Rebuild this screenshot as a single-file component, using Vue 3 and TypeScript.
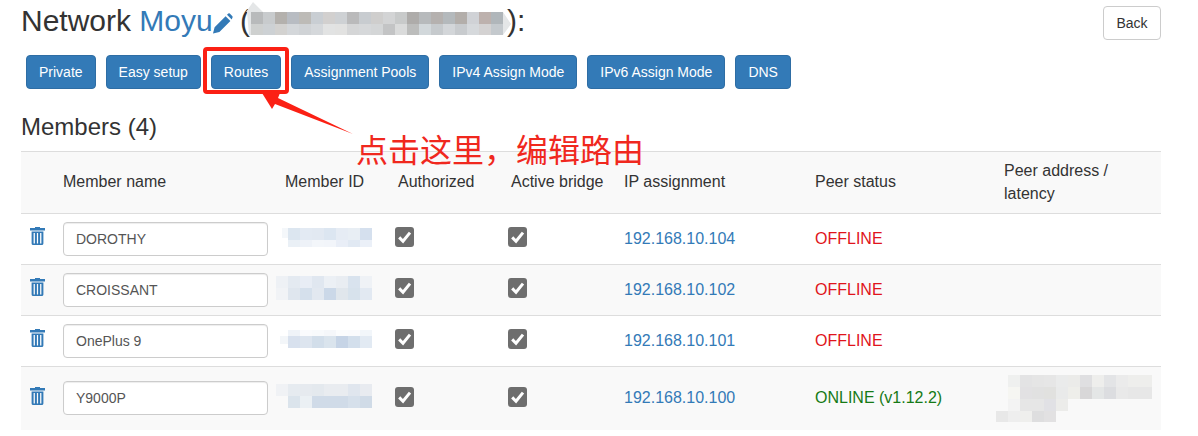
<script setup lang="ts">
interface Mosaic { x: number; y: number; h: number; colors: string[] }
interface Member { name: string; mosaic: Mosaic[]; ip: string; status: string; online: boolean }

const buttons: string[] = ['Private', 'Easy setup', 'Routes', 'Assignment Pools', 'IPv4 Assign Mode', 'IPv6 Assign Mode', 'DNS']
const headers: string[] = ['', 'Member name', 'Member ID', 'Authorized', 'Active bridge', 'IP assignment', 'Peer status', 'Peer address / latency']

const members: Member[] = [
  { name: 'DOROTHY', ip: '192.168.10.104', status: 'OFFLINE', online: false, mosaic: [
    { x: 6, y: 3, h: 10, colors: ['#f4f7fa'] },
    { x: 12, y: 3, h: 12, colors: ['#dce6f0', '#e3eaf3', '#e2e9f2', '#dce6f1', '#e6ecf4', '#e8eef4', '#d5e0ee'] },
    { x: 12, y: 15, h: 7, colors: ['#eaf0f6', '#eef2f8', '#f3f6fa', '#f2f5fa', '#e9eef7', '#e1e9f3', '#ebf0f8'] },
  ] },
  { name: 'CROISSANT', ip: '192.168.10.102', status: 'OFFLINE', online: false, mosaic: [
    { x: 0, y: 0, h: 12, colors: ['#eef1f5', '#e4eaf1', '#e8edf5', '#e0e7f0', '#ecf0f5', '#e9edf2', '#d9e3ee', '#eff2f6'] },
    { x: 0, y: 12, h: 12, colors: ['#f1f3f6', '#dfe6ee', '#d5e0ec', '#e2e8f0', '#cbd8e8', '#e0e6ec', '#d7e2ec', '#e2e9f2'] },
  ] },
  { name: 'OnePlus 9', ip: '192.168.10.101', status: 'OFFLINE', online: false, mosaic: [
    { x: 4, y: 9, h: 8, colors: ['#f3f6f9'] },
    { x: 12, y: 3, h: 6, colors: ['#eff3f8', '#fafbfd', '#f8fafc', '#f5f7fa', '#fbfcfd', '#fafbfd', '#f2f6fa'] },
    { x: 12, y: 9, h: 12, colors: ['#d8e1ee', '#dde5ef', '#d2deea', '#dae4ed', '#c6d4e6', '#d3dfec', '#e2eaf3'] },
  ] },
  { name: 'Y9000P', ip: '192.168.10.100', status: 'ONLINE (v1.12.2)', online: true, mosaic: [
    { x: 0, y: 0, h: 12, colors: ['#f0f2f5', '#e6ebf0', '#e6eaef', '#e4e9ee', '#e9ecf0', '#e9ecf0', '#e0e6ee', '#e8ebf0'] },
    { x: 12, y: 12, h: 12, colors: ['#dbe4ec', '#ebf0f4', '#d0dbe8', '#d0dbe8', '#d0dbe8', '#d6e0eb', '#d0dbe7'] },
  ] },
]

const titleMosaic: Mosaic[] = [
  { x: 9, y: 10, h: 12, colors: ['#b8babb', '#c8cbcd', '#b4b1ad', '#b8bcc2', '#bdbbb7', '#c9ced3', '#d2d0cf', '#ced1d4', '#bababb', '#c8ccd0', '#cfcecd', '#d3d4d5', '#c8caca', '#aeacaa', '#b7babc', '#b5b1af', '#b4b9bc', '#b3aeaa', '#d0d2d6', '#bdb1ad', '#b0b6ba'] },
  { x: 9, y: 22, h: 11, colors: ['#ced0cf', '#cdd1d4', '#d3d2d0', '#d4d7da', '#d0d3d6', '#d5d8db', '#e2e3e3', '#e2e2e1', '#d5d6d7', '#d6d8da', '#d4d6d7', '#c3c4c5', '#dadbdb', '#bcbdbc', '#d2d8db', '#c6cacd', '#d3d6d9', '#c8cbce', '#d6d9dc', '#d4d2d2', '#c4c9cd'] },
]

const addressMosaic: Mosaic[] = [
  { x: 12, y: 0, h: 12, colors: ['#eff0ef', '#e3e3e4', '#e5e5e5', '#e6e6e6', '#eaebeb', '#ebebe9', '#dfdfe1', '#eeeeec', '#e3e4e6', '#ebebeb', '#eeeeec', '#eeeeec', '#e8e8e8'] },
  { x: 12, y: 12, h: 12, colors: ['#f6f6f2', '#e2e1e3', '#e1e1e1', '#e1e1df', '#e9eaea', '#eeeeea', '#d8d7d8', '#e4e6e6', '#dcdde0', '#e9e9e9', '#e7e7e7', '#e7e7e7', '#e8e8e8'] },
  { x: 12, y: 24, h: 12, colors: ['#f3f3f3', '#e6e6e6', '#e6e6e6', '#e1e1e5', '#ececea'] },
  { x: 0, y: 36, h: 11, colors: ['#e8e8e8', '#eeeeee', '#efefed', '#dededf', '#e2e1e2'] },
]
</script>

<template>
  <div class="page">
    <header class="head">
      <h2 class="title">
        Network <a class="link">Moyu</a><svg class="pencil" width="20" height="21" viewBox="0 0 20 21"><path d="M0 20.5 L1.6 14.2 L12.6 3.2 L17.4 8 L6.4 19 Z M14 1.8 L15.3 .6 Q16 0 16.8 .6 L19.4 3.2 Q20 4 19.4 4.8 L18.7 6.6 Z" /></svg>
        (<svg class="blur-title" width="270" height="36" viewBox="0 0 270 36">
          <path d="M4 10 L11 0 L21 10 Z M5 10 H9 V33 H7 Z M261 10 L269 22 L261 33 Z" fill="#e4e6e7" />
          <g v-for="(r, i) in titleMosaic" :key="i">
            <rect v-for="(c, j) in r.colors" :key="j" :x="r.x + j * 12" :y="r.y" width="12" :height="r.h" :fill="c" />
          </g>
        </svg>):
      </h2>
      <button class="btn back" type="button">Back</button>
    </header>

    <div class="actions">
      <button v-for="b in buttons" :key="b" class="btn primary" type="button">{{ b }}</button>
    </div>

    <h3 class="members">Members (4)</h3>

    <table class="grid">
      <colgroup>
        <col style="width: 34px" /><col style="width: 222px" /><col style="width: 113px" /><col style="width: 113px" />
        <col style="width: 113px" /><col style="width: 191px" /><col style="width: 189px" /><col style="width: 165px" />
      </colgroup>
      <thead>
        <tr>
          <th v-for="(h, i) in headers" :key="i">{{ h }}</th>
        </tr>
      </thead>
      <tbody>
        <tr v-for="(m, idx) in members" :key="m.name" :class="{ striped: idx % 2 === 1 }">
          <td class="cell-icon">
            <svg class="trash" width="15" height="18" viewBox="0 0 15 18">
              <path d="M5 0 H10 V1 H15 V3.4 H0 V1 H5 Z" />
              <path fill-rule="evenodd" d="M1.6 4.6 H13.4 V16.4 Q13.4 18 11.8 18 H3.2 Q1.6 18 1.6 16.4 Z M3.6 6 V16.6 H4.9 V6 Z M6.9 6 V16.6 H8.1 V6 Z M10.1 6 V16.6 H11.4 V6 Z" />
            </svg>
          </td>
          <td><input class="name-input" type="text" :value="m.name" /></td>
          <td>
            <svg class="blur-id" width="96" height="28" viewBox="0 0 96 28">
              <g v-for="(r, i) in m.mosaic" :key="i">
                <rect v-for="(c, j) in r.colors" :key="j" :x="r.x + j * 12" :y="r.y" width="12" :height="r.h" :fill="c" />
              </g>
            </svg>
          </td>
          <td v-for="k in 2" :key="k" class="cell-check">
            <svg class="check" width="19" height="20" viewBox="0 0 19 20">
              <rect width="19" height="20" rx="3" fill="#6e6e6e" />
              <path d="M4.2 10.4 L8 14.2 L15 5.6" fill="none" stroke="#fff" stroke-width="3" />
            </svg>
          </td>
          <td class="cell-text"><a class="link">{{ m.ip }}</a></td>
          <td class="cell-text" :class="m.online ? 'online' : 'offline'">{{ m.status }}</td>
          <td class="cell-address">
            <svg v-if="m.online" class="blur-address" width="156" height="47" viewBox="0 0 156 47">
              <g v-for="(r, i) in addressMosaic" :key="i">
                <rect v-for="(c, j) in r.colors" :key="j" :x="r.x + j * 12" :y="r.y" width="12" :height="r.h" :fill="c" />
              </g>
            </svg>
          </td>
        </tr>
      </tbody>
    </table>

    <div class="highlight"></div>
    <svg class="arrow" width="100" height="50" viewBox="0 0 100 50">
      <polygon points="2,3 20,3 18,8 93,44 15,14 12,19" fill="#fb2014" />
    </svg>
    <div class="note">点击这里，编辑路由</div>
  </div>
</template>

<style>
html, body { margin: 0; background: #fff; }
</style>

<style scoped>
.page {
  position: relative;
  box-sizing: border-box;
  width: 1198px;
  height: 436px;
  overflow: hidden;
  padding: 5px 37px 0 21px;
  font-family: "Liberation Sans", Arial, sans-serif;
  font-size: 16px;
  line-height: 1.42857;
  color: #333;
  background: #fff;
}
.head {
  display: flex;
  justify-content: space-between;
  align-items: flex-start;
  height: 33px;
}
.title {
  margin: -3px 0 0;
  font-size: 30px;
  font-weight: 400;
  line-height: 33px;
  white-space: nowrap;
}
.link { color: #337ab7; }
.pencil { fill: #337ab7; vertical-align: -3px; margin-right: -1px; }
.blur-title { vertical-align: -7px; margin: 0 -5px 0 -8px; overflow: visible; }
.btn {
  box-sizing: border-box;
  height: 34px;
  padding: 6px 12px;
  font-family: inherit;
  font-size: 14px;
  line-height: 20px;
  border: 1px solid transparent;
  border-radius: 4px;
  white-space: nowrap;
}
.back {
  width: 58px;
  margin-top: 1px;
  padding: 6px 0;
  color: #333;
  background: #fff;
  border-color: #ccc;
}
.primary {
  color: #fff;
  background: #337ab7;
  border-color: #2e6da4;
}
.actions {
  display: flex;
  gap: 10px;
  margin: 17px 0 0 5px;
}
.members {
  margin: 24px 0 0;
  font-size: 24px;
  font-weight: 400;
  line-height: 27px;
}
.grid {
  width: 1140px;
  margin-top: 11px;
  table-layout: fixed;
  border-collapse: collapse;
  border-top: 1px solid #ddd;
}
.grid th {
  padding: 8px 8px 7px;
  font-weight: 400;
  text-align: left;
  vertical-align: middle;
  background: #f9f9f9;
  border-bottom: 1px solid #ddd;
}
.grid td {
  padding: 8px;
  vertical-align: middle;
  border-top: 1px solid #ddd;
}
.grid tbody tr:first-child td { border-top: 0; }
.grid td.cell-text { padding-top: 9px; }
.striped td { background: #f9f9f9; }
.cell-icon { overflow: visible; }
.trash { display: block; margin: -5px 0 0 1px; fill: #337ab7; }
.name-input {
  display: block;
  box-sizing: border-box;
  width: 205px;
  height: 34px;
  padding: 6px 12px;
  font-family: inherit;
  font-size: 14px;
  line-height: 20px;
  color: #555;
  background: #fff;
  border: 1px solid #ccc;
  border-radius: 4px;
  box-shadow: inset 0 1px 1px rgba(0, 0, 0, .075);
}
.blur-id { display: block; margin-left: -9px; }
.check { display: block; margin: -3px 0 0 -3px; }
.offline { color: #e0141c; }
.online { color: #167a16; }
.cell-address { padding-left: 0 !important; }
.blur-address { display: block; }
.highlight {
  position: absolute;
  left: 203px;
  top: 47px;
  width: 86px;
  height: 47px;
  box-sizing: border-box;
  border: 4px solid #fb2014;
  border-radius: 4px;
}
.arrow { position: absolute; left: 260px; top: 90px; }
.note {
  position: absolute;
  left: 356px;
  top: 126px;
  font-family: "Noto Sans CJK SC", sans-serif;
  font-size: 32px;
  line-height: 44px;
  color: #f0281e;
  white-space: nowrap;
}
</style>
